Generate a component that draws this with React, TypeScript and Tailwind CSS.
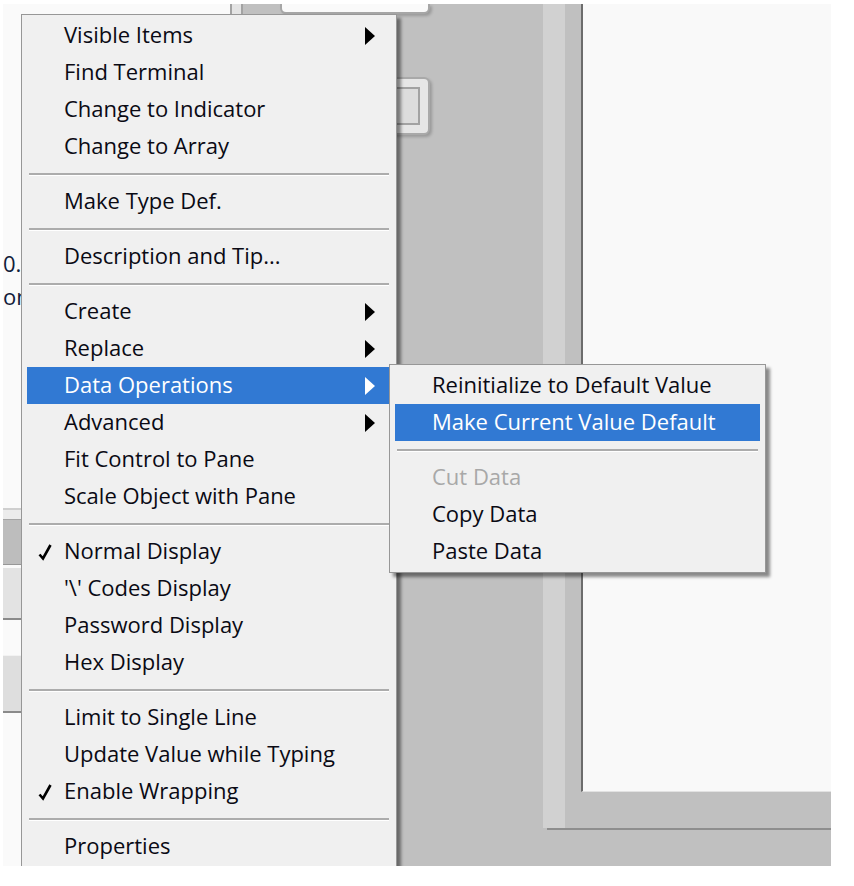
import React from "react";

type Entry =
  | { sep: true }
  | {
      sep?: false;
      label: string;
      sub?: boolean;
      checked?: boolean;
      active?: boolean;
      disabled?: boolean;
    };

const mainItems: Entry[] = [
  { label: "Visible Items", sub: true },
  { label: "Find Terminal" },
  { label: "Change to Indicator" },
  { label: "Change to Array" },
  { sep: true },
  { label: "Make Type Def." },
  { sep: true },
  { label: "Description and Tip..." },
  { sep: true },
  { label: "Create", sub: true },
  { label: "Replace", sub: true },
  { label: "Data Operations", sub: true, active: true },
  { label: "Advanced", sub: true },
  { label: "Fit Control to Pane" },
  { label: "Scale Object with Pane" },
  { sep: true },
  { label: "Normal Display", checked: true },
  { label: "'\\' Codes Display" },
  { label: "Password Display" },
  { label: "Hex Display" },
  { sep: true },
  { label: "Limit to Single Line" },
  { label: "Update Value while Typing" },
  { label: "Enable Wrapping", checked: true },
  { sep: true },
  { label: "Properties" },
];

const dataOpsItems: Entry[] = [
  { label: "Reinitialize to Default Value" },
  { label: "Make Current Value Default", active: true },
  { sep: true },
  { label: "Cut Data", disabled: true },
  { label: "Copy Data" },
  { label: "Paste Data" },
];

const Arrow = ({ white }: { white?: boolean }) => (
  <svg width="10" height="18" viewBox="0 0 10 18" className="shrink-0">
    <polygon points="0,0 10,9 0,18" fill={white ? "#ffffff" : "#000000"} />
  </svg>
);

const Check = () => (
  <svg
    width="14"
    height="18"
    viewBox="0 0 14 18"
    className="absolute left-[11px] top-[10px]"
  >
    <path
      d="M1.5 11.5 L5 15.5 L12.5 2"
      fill="none"
      stroke="#000"
      strokeWidth="2.6"
    />
  </svg>
);

const MenuRow = ({ entry }: { entry: Entry }) => {
  if (entry.sep) {
    return (
      <div className="flex h-[18px] flex-col justify-center px-[7px]">
        <div className="h-[2px] bg-[#acacac]" />
        <div className="h-px bg-white" />
      </div>
    );
  }
  const tone = entry.active
    ? "bg-[#3179d3] text-white"
    : entry.disabled
      ? "text-[#a8a8a8]"
      : "text-[#0a0a14]";
  return (
    <div
      className={`relative mx-[5px] flex h-[37px] items-center justify-between pl-[37px] pr-[16px] leading-[37px] ${tone}`}
    >
      {entry.checked && <Check />}
      <span className="relative -top-px whitespace-nowrap">{entry.label}</span>
      {entry.sub && <Arrow white={entry.active} />}
    </div>
  );
};

const Menu = ({ items, className }: { items: Entry[]; className: string }) => (
  <div
    className={`absolute border border-[#979797] bg-[#f0f0f0] py-[2px] shadow-[4px_4px_3px_rgba(0,0,0,0.45)] ${className}`}
  >
    {items.map((entry, i) => (
      <MenuRow key={i} entry={entry} />
    ))}
  </div>
);

const LeftPane = () => (
  <div className="flex w-[227px] shrink-0 flex-col bg-[#fafafa]">
    <div className="mt-[243px] whitespace-nowrap leading-[33px] text-[#10203a]">
      0.00
    </div>
    <div className="whitespace-nowrap leading-[33px] text-[#10203a]">on</div>
    <div className="mt-[195px] h-[2px] w-[18px] bg-[#cfcfcf]" />
    <div className="h-[9px] w-[18px] bg-[#ececec]" />
    <div className="h-[46px] w-[18px] border-y border-t-[#a5a5a5] border-b-[#979797] bg-[#bdbdbd]" />
    <div className="h-[3px]" />
    <div className="h-[52px] w-[18px] border-b-2 border-[#8a8a8a] bg-[#e3e3e3]" />
    <div className="h-[35px]" />
    <div className="h-[58px] w-[18px] border-t border-b-2 border-t-[#f2f2f2] border-b-[#8a8a8a] bg-[#dedede]" />
  </div>
);

const Splitter = () => (
  <div className="w-[13px] shrink-0 border-x-2 border-[#a3a3a3] bg-[#e4e4e4]" />
);

const MiddleArea = () => (
  <div className="flex w-[300px] shrink-0 flex-col bg-[#c0c0c0] pl-[37px]">
    <div className="h-[10px] w-[150px] rounded-b-[6px] border-x-2 border-b-2 border-[#a6a6a6] bg-[#fafafa] shadow-[2px_2px_3px_rgba(0,0,0,0.2)]" />
    <div className="mt-[63px] h-[58px] w-[150px] rounded-[6px] border-2 border-[#a9a9a9] bg-[#e6e6e6] p-[8px] shadow-[2px_2px_3px_rgba(0,0,0,0.2)]">
      <div className="h-full w-full border-2 border-[#a2a2a2] bg-[#dcdcdc]" />
    </div>
  </div>
);

const RightFrame = () => (
  <div className="flex w-[288px] shrink-0 flex-col bg-[#c0c0c0]">
    <div className="flex h-[824px]">
      <div className="w-[22px] bg-[#d1d1d1]" />
      <div className="w-[16px]" />
      <div className="flex flex-1 flex-col">
        <div className="h-[788px] border-l-2 border-b border-l-[#6c6c6c] border-b-[#e2e2e2] bg-[#f9f9f9]" />
      </div>
    </div>
    <div className="ml-[4px] h-[2px] bg-[#8e8e8e]" />
  </div>
);

export default function App() {
  return (
    <div className="h-[886px] w-[854px] bg-white pl-[3px] pt-[4px] font-['Open_Sans',sans-serif] text-[22px]">
      <div className="relative flex h-[862px] w-[828px] overflow-hidden bg-[#c0c0c0]">
        <LeftPane />
        <Splitter />
        <MiddleArea />
        <RightFrame />
        <Menu items={mainItems} className="left-[18px] top-[10px] w-[376px]" />
        <Menu items={dataOpsItems} className="left-[386px] top-[360px] w-[377px]" />
      </div>
    </div>
  );
}
